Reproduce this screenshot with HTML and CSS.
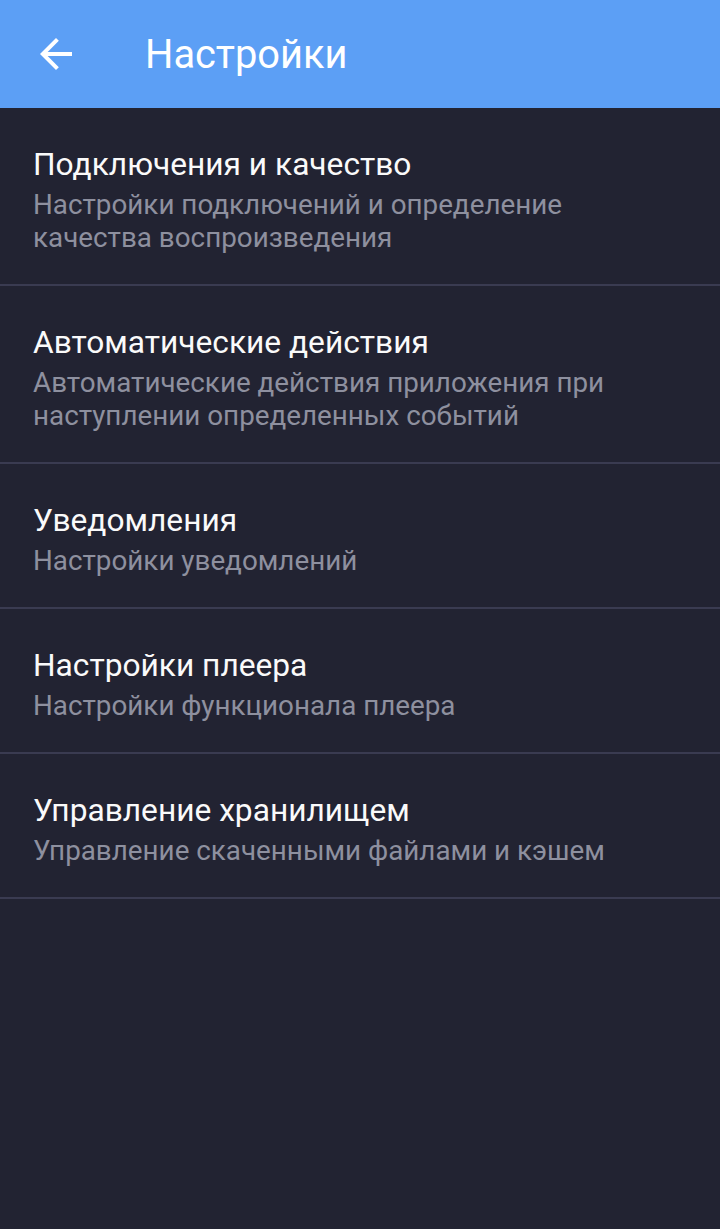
FILE: index.html
```html
<!DOCTYPE html>
<html lang="ru">
<head>
<meta charset="utf-8">
<title>Настройки</title>
<link rel="stylesheet" href="styles.css">
</head>
<body>
<header class="toolbar">
  <button class="back" aria-label="Назад">
    <svg viewBox="0 0 24 24" width="48" height="48"><path fill="#fff" d="M20 11H7.83l5.59-5.59L12 4l-8 8 8 8 1.41-1.41L7.83 13H20v-2z"/></svg>
  </button>
  <h1 class="title">Настройки</h1>
</header>
<main class="list">
  <div class="item">
    <div class="item-title">Подключения и качество</div>
    <div class="item-sub">Настройки подключений и определение качества воспроизведения</div>
  </div>
  <div class="item">
    <div class="item-title">Автоматические действия</div>
    <div class="item-sub">Автоматические действия приложения при наступлении определенных событий</div>
  </div>
  <div class="item">
    <div class="item-title">Уведомления</div>
    <div class="item-sub">Настройки уведомлений</div>
  </div>
  <div class="item">
    <div class="item-title">Настройки плеера</div>
    <div class="item-sub">Настройки функционала плеера</div>
  </div>
  <div class="item">
    <div class="item-title">Управление хранилищем</div>
    <div class="item-sub">Управление скаченными файлами и кэшем</div>
  </div>
</main>
</body>
</html>
```
FILE: styles.css
```css
html, body {
  margin: 0;
  padding: 0;
  height: 100%;
}
body {
  background: #222332;
  font-family: Roboto, "Noto Sans", sans-serif;
}
.toolbar {
  height: 108px;
  background: #5c9ff5;
  display: flex;
  align-items: center;
  padding-left: 32px;
  box-sizing: border-box;
}
.back {
  width: 48px;
  height: 48px;
  padding: 0;
  border: 0;
  background: none;
  display: flex;
}
.title {
  margin: 0 0 0 65px;
  color: #fff;
  font-size: 39.8px;
  font-weight: 400;
}
.list {
  display: flex;
  flex-direction: column;
}
.item {
  padding: 37px 40px 30px 33px;
  border-bottom: 2px solid #3a3b51;
  display: flex;
  flex-direction: column;
  gap: 3px;
}
.item-title {
  color: #fafafa;
  font-size: 31.7px;
  line-height: 40px;
}
.item-sub {
  color: #8e909f;
  font-size: 27.8px;
  line-height: 33px;
}
```
